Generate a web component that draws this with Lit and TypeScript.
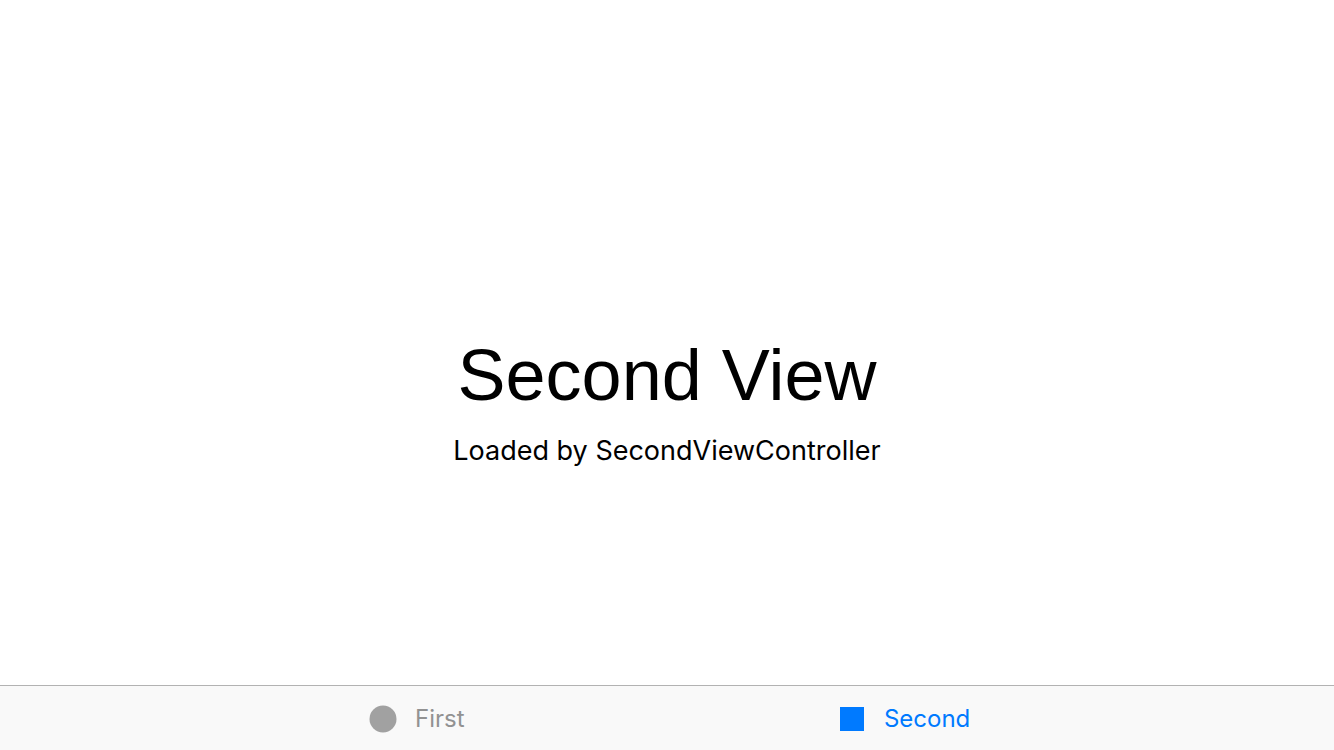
import { LitElement, html, css, svg } from "lit";
import { customElement, state } from "lit/decorators.js";

const views = [
  {
    label: "First",
    title: "First View",
    detail: "Loaded by FirstViewController",
    icon: svg`<circle cx="14" cy="14" r="13.5" />`,
  },
  {
    label: "Second",
    title: "Second View",
    detail: "Loaded by SecondViewController",
    icon: svg`<rect x="2" y="2" width="24" height="24" />`,
  },
];

@customElement("app-root")
export class AppRoot extends LitElement {
  @state() private selected = 1;

  static styles = css`
    :host {
      display: flex;
      flex-direction: column;
      min-height: 100vh;
      background: #fff;
      color: #000;
      font-family: Inter, "Liberation Sans", sans-serif;
    }
    .view {
      flex: 1;
      display: flex;
      flex-direction: column;
      align-items: center;
      justify-content: center;
      gap: 17px;
      padding-top: 115px;
      text-align: center;
    }
    .title {
      margin: 0;
      font: 400 72px/84px "Liberation Sans", Arial, sans-serif;
    }
    .detail {
      margin: 0;
      font-size: 27px;
      line-height: 34px;
    }
    .tabs {
      display: flex;
      justify-content: center;
      gap: 2px;
      border-top: 1px solid #b2b2b2;
      background: #f9f9f9;
    }
    .tab {
      display: flex;
      align-items: center;
      justify-content: center;
      gap: 18px;
      width: 35%;
      height: 64px;
      padding: 2px 0 0 6px;
      border: 0;
      background: none;
      color: #929292;
      font: 400 24px/30px Inter, "Liberation Sans", sans-serif;
      cursor: pointer;
    }
    .tab[aria-selected="true"] {
      color: #007aff;
    }
    .label {
      min-width: 87px;
      text-align: left;
    }
    .icon {
      flex: none;
      width: 28px;
      height: 28px;
      fill: #a1a1a1;
    }
    .tab[aria-selected="true"] .icon {
      fill: currentColor;
    }
  `;

  render() {
    const view = views[this.selected];
    return html`
      <main class="view" id="view" role="tabpanel">
        <h1 class="title">${view.title}</h1>
        <p class="detail">${view.detail}</p>
      </main>
      <nav class="tabs" role="tablist">
        ${views.map(
          (v, i) => html`
            <button
              class="tab"
              role="tab"
              aria-controls="view"
              aria-selected=${i === this.selected ? "true" : "false"}
              @click=${() => (this.selected = i)}
            >
              <svg class="icon" viewBox="0 0 28 28" aria-hidden="true">${v.icon}</svg>
              <span class="label">${v.label}</span>
            </button>
          `
        )}
      </nav>
    `;
  }
}
